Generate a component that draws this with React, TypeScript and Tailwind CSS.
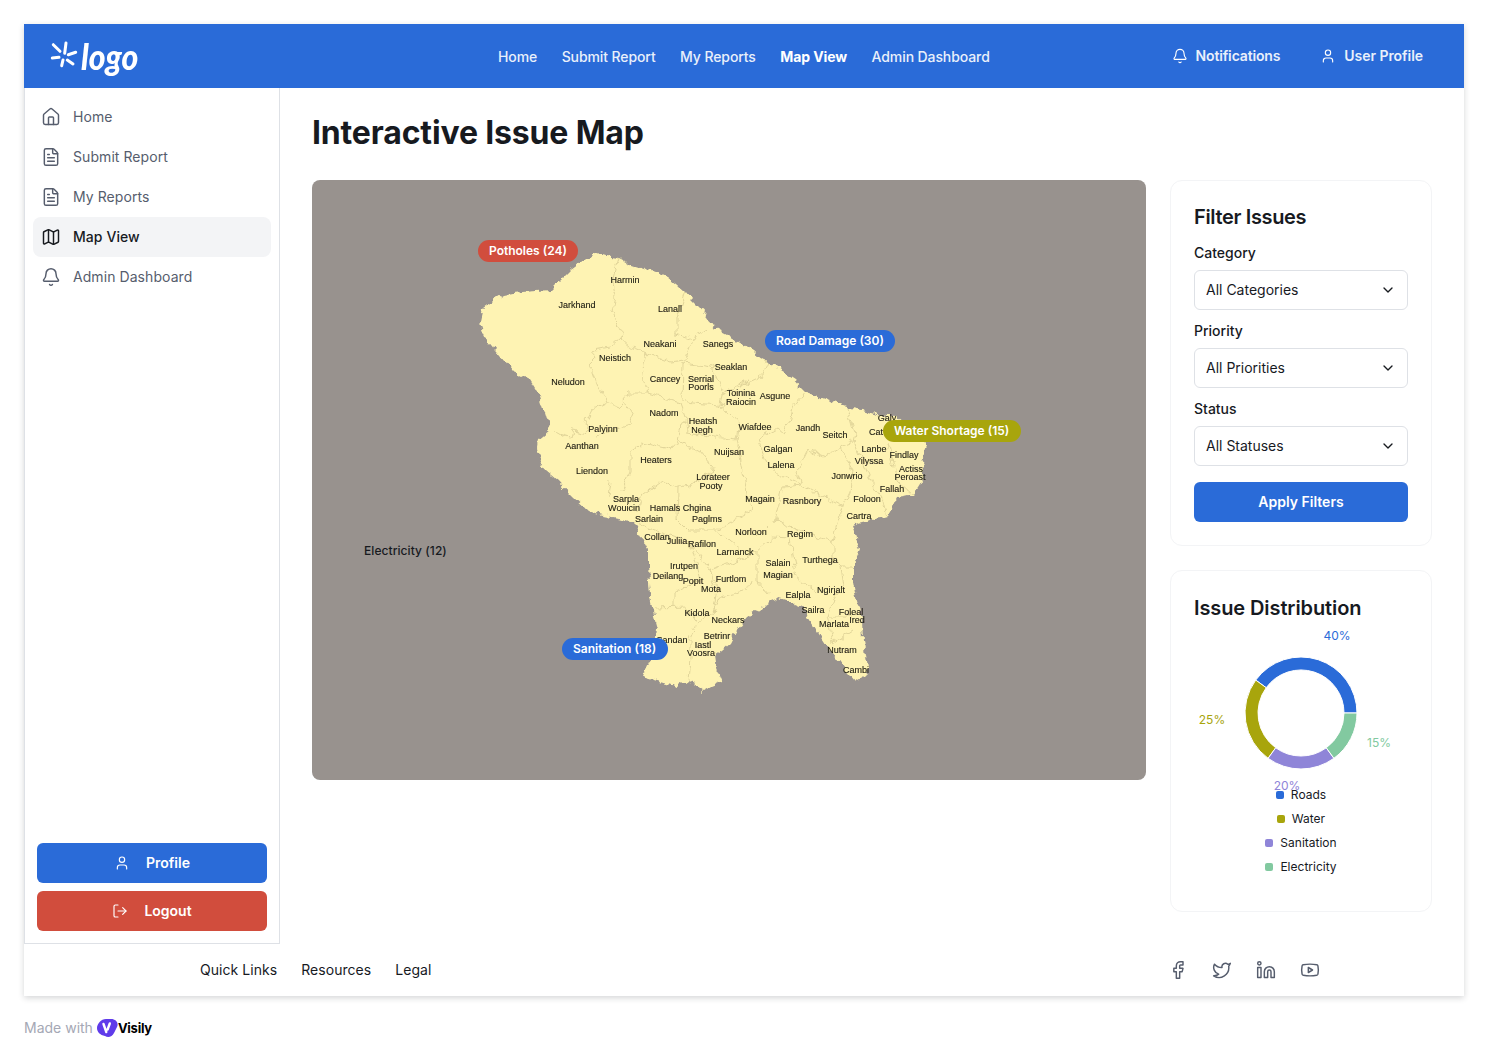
import { Bell, ChevronDown, Facebook, FileText, House, Linkedin, LogOut, Map as MapIcon, Twitter, User, Youtube } from "lucide-react";

const navLinks = ["Home", "Submit Report", "My Reports", "Map View", "Admin Dashboard"];

const sideLinks = [
  { label: "Home", icon: House },
  { label: "Submit Report", icon: FileText },
  { label: "My Reports", icon: FileText },
  { label: "Map View", icon: MapIcon, active: true },
  { label: "Admin Dashboard", icon: Bell },
];

const outline =
  "595,253 605,256 618,258 630,264 643,268 655,272 667,277 676,284 685,292 692,300 700,308 708,318 715,328 728,335 740,342 754,352 767,362 781,371 795,380 801,387 807,393 827,400 847,407 862,410 877,415 897,417 903,422 915,432 928,447 925,455 922,462 924,471 923,480 918,488 913,495 905,497 897,498 892,508 887,517 880,519 872,520 862,522 852,525 856,537 860,550 856,560 853,570 853,582 855,593 859,607 862,620 863,640 865,656 868,672 862,678 855,682 850,676 845,670 836,658 827,647 818,633 810,620 805,612 800,605 790,601 780,598 770,602 758,610 747,617 742,623 737,630 733,637 730,643 722,650 715,655 716,662 717,670 722,682 712,686 703,691 695,685 687,680 677,687 660,682 642,677 648,662 655,647 656,637 657,627 653,612 650,597 649,582 648,567 648,550 641,536 633,522 618,518 603,515 595,513 587,510 572,496 557,480 545,470 540,460 537,447 538,440 550,430 545,413 540,397 535,388 530,380 522,376 513,372 500,356 487,340 483,331 480,322 483,308 493,301 503,295 513,293 523,292 537,291 550,290 560,280 570,270 582,261";

const borders = [
  "618,258 612,283 615,297 612,310 623,333 620,338 610,347 593,350 592,373 597,387 607,402",
  "620,338 630,347 645,353 642,365 645,387 648,393 628,393 623,400 620,407 607,402 592,410 585,423 590,433 572,430 570,437 553,432",
  "685,292 677,318 677,335 692,340 685,360 670,362 645,353",
  "707,330 692,340",
  "683,363 682,400 693,403 720,405 722,393 750,380",
  "683,363 712,367 722,393",
  "648,393 680,403 685,417 678,440 673,450 643,443 630,453 630,473 622,490",
  "623,400 633,417 630,425 597,435",
  "685,417 687,433 737,440 740,423 720,405",
  "767,362 760,378 740,387 750,380",
  "805,392 793,407 790,423 783,433 777,428 758,440 767,463 775,473 802,485",
  "848,408 855,433 853,442 840,447 823,457 808,450 797,472 802,485",
  "840,447 853,470 850,490 842,507",
  "855,442 873,487 883,500 887,517",
  "888,443 897,480 913,495",
  "802,485 783,487 775,520 757,538",
  "802,485 842,507 835,530 833,543",
  "637,510 640,497 663,480 678,488",
  "608,497 610,480",
  "678,488 677,520 687,530 717,530 752,510 747,493 737,440",
  "633,522 670,535 690,542 710,570",
  "717,530 743,552 757,550 773,537 790,538 797,577 817,593",
  "757,550 757,580 770,595",
  "710,570 753,555",
  "710,570 717,590 713,613",
  "750,580 747,590 720,597 713,610",
  "673,607 673,593 700,580 690,542",
  "655,608 687,607 697,623 713,613",
  "697,623 690,640 690,657 688,680",
  "833,543 833,560 840,567 843,587 833,600 827,617 833,643",
  "840,567 853,567",
  "827,617 853,617",
  "833,643 853,630",
  "775,520 833,543",
  "678,440 700,452 715,470 697,482 678,488",
];

const mapLabels: [string, number, number][] = [
  ["Harmin", 625, 280], ["Jarkhand", 577, 305], ["Lanall", 670, 309], ["Neakani", 660, 344], ["Sanegs", 718, 344],
  ["Neistich", 615, 358], ["Seaklan", 731, 367], ["Cancey", 665, 379], ["Serrial", 701, 379], ["Poorls", 701, 387],
  ["Neludon", 568, 382], ["Toinina", 741, 393], ["Raiocin", 741, 402], ["Asgune", 775, 396], ["Nadom", 664, 413],
  ["Heatsh", 703, 421], ["Negh", 702, 430], ["Wiafdee", 755, 427], ["Jandh", 808, 428], ["Seitch", 835, 435],
  ["Palyinn", 603, 429], ["Galy", 887, 418], ["Cat", 876, 432], ["Aanthan", 582, 446], ["Galgan", 778, 449],
  ["Nuijsan", 729, 452], ["Lanbe", 874, 449], ["Findlay", 904, 455], ["Vilyssa", 869, 461], ["Heaters", 656, 460],
  ["Lalena", 781, 465], ["Liendon", 592, 471], ["Actiss", 911, 469], ["Peroast", 910, 477], ["Jonwrio", 847, 476],
  ["Lorateer", 713, 477], ["Pooty", 711, 486], ["Fallah", 892, 489], ["Magain", 760, 499], ["Rasnbory", 802, 501],
  ["Foloon", 867, 499], ["Sarpla", 626, 499], ["Wouicin", 624, 508], ["Hamals", 665, 508], ["Chgina", 697, 508],
  ["Sarlain", 649, 519], ["Paglms", 707, 519], ["Cartra", 859, 516], ["Norloon", 751, 532], ["Regim", 800, 534],
  ["Collan", 657, 537], ["Juliia", 677, 541], ["Rafilon", 702, 544], ["Larnanck", 735, 552], ["Turthega", 820, 560],
  ["Salain", 778, 563], ["Magian", 778, 575], ["Irutpen", 684, 566], ["Deilang", 668, 576], ["Popit", 693, 581],
  ["Furtlom", 731, 579], ["Mota", 711, 589], ["Ngirjalt", 831, 590], ["Ealpla", 798, 595], ["Sailra", 813, 610],
  ["Foleal", 851, 612], ["Marlata", 834, 624], ["Ired", 857, 620], ["Kidola", 697, 613], ["Neckars", 728, 620],
  ["Sandan", 672, 640], ["Betrinr", 717, 636], ["Iastl", 703, 645], ["Voosra", 701, 653], ["Nutram", 842, 650],
  ["Cambi", 856, 670],
];

const chips = [
  { label: "Potholes (24)", cls: "left-[166px] top-[60px] pr-[11px] bg-[#d14d3d]" },
  { label: "Road Damage (30)", cls: "left-[453px] top-[150px] pr-[11px] bg-[#2a6bd8]" },
  { label: "Water Shortage (15)", cls: "left-[571px] top-[240px] pr-[12px] bg-[#a8a50c]" },
  { label: "Sanitation (18)", cls: "left-[250px] top-[458px] pr-[12px] bg-[#2a6bd8]" },
];

const filters = [
  { label: "Category", value: "All Categories" },
  { label: "Priority", value: "All Priorities" },
  { label: "Status", value: "All Statuses" },
];

const legend = [
  { label: "Roads", color: "bg-[#2a6bd8]" },
  { label: "Water", color: "bg-[#a8a50c]" },
  { label: "Sanitation", color: "bg-[#8f85d8]" },
  { label: "Electricity", color: "bg-[#82c9a0]" },
];

// donut goes anticlockwise from 3 o'clock
const slices = [
  { pct: 40, color: "#2a6bd8" },
  { pct: 25, color: "#a8a50c" },
  { pct: 20, color: "#8f85d8" },
  { pct: 15, color: "#82c9a0" },
];

const arcPath = (from: number, to: number) => {
  const cx = 107;
  const cy = 88;
  const ro = 56;
  const ri = 43;
  const pt = (r: number, a: number) => `${cx + r * Math.cos(a)} ${cy - r * Math.sin(a)}`;
  const large = to - from > Math.PI ? 1 : 0;
  return `M${pt(ro, from)} A${ro} ${ro} 0 ${large} 0 ${pt(ro, to)} L${pt(ri, to)} A${ri} ${ri} 0 ${large} 1 ${pt(ri, from)} Z`;
};

const Donut = () => {
  let start = 0;
  return (
    <svg width="214" height="168" viewBox="0 0 214 168" className="block">
      {slices.map((s) => {
        const end = start + (s.pct / 100) * Math.PI * 2;
        const d = arcPath(start, end);
        start = end;
        return <path key={s.color} d={d} fill={s.color} stroke="#fff" strokeWidth="1" />;
      })}
      <text x="143" y="15" textAnchor="middle" fontSize="12" fill="#2a6bd8">40%</text>
      <text x="18" y="99" textAnchor="middle" fontSize="12" fill="#a8a50c">25%</text>
      <text x="93" y="165" textAnchor="middle" fontSize="12" fill="#8f85d8">20%</text>
      <text x="185" y="122" textAnchor="middle" fontSize="12" fill="#82c9a0">15%</text>
    </svg>
  );
};

const IssueMap = () => (
  <svg viewBox="312 180 834 600" className="absolute inset-0 w-full h-full">
    <defs>
      <filter id="rough" x="-5%" y="-5%" width="110%" height="110%" colorInterpolationFilters="sRGB">
        <feTurbulence type="fractalNoise" baseFrequency="0.13" numOctaves="2" seed="4" result="noise" />
        <feDisplacementMap in="SourceGraphic" in2="noise" scale="9" xChannelSelector="R" yChannelSelector="G" />
        <feGaussianBlur stdDeviation="0.35" />
      </filter>
      <filter id="soft">
        <feGaussianBlur stdDeviation="0.2" />
      </filter>
    </defs>
    <g filter="url(#rough)">
      <polygon points={outline} fill="#fef3b3" />
      {borders.map((b) => (
        <polyline key={b} points={b} fill="none" stroke="#ded196" strokeWidth="0.9" />
      ))}
    </g>
    <g filter="url(#soft)" fontSize="9" fill="#1c1a10" stroke="#1c1a10" strokeWidth="0.12" textAnchor="middle" style={{ fontFamily: "Liberation Sans, sans-serif" }}>
      {mapLabels.map(([name, x, y]) => (
        <text key={`${name}${x}`} x={x} y={y + 3}>{name}</text>
      ))}
    </g>
  </svg>
);

export default function App() {
  return (
    <div className="[font-family:Inter,sans-serif] bg-white min-h-[1060px] px-6 pt-6 text-[#171a1f]">
      <div className="w-[1440px] shadow-[0_2px_6px_rgba(23,26,31,0.18)]">
        <header className="h-16 bg-[#2a6bd8] flex items-center text-white text-sm font-medium relative">
          <div className="flex items-center pl-[26px] w-[400px]">
            <svg width="28" height="28" viewBox="0 0 28 28" className="shrink-0 overflow-visible" fill="none" stroke="#fff" strokeWidth="3" strokeLinecap="round">
              <path d="M16 1L14.700 11.300M3.300 2.700L10 9.300M2.300 16L9 15.300M11.700 23.700L13 18M23 22L17.300 18M25.700 10.300L18.300 12.700" />
            </svg>
            <span className="[font-family:Lato,sans-serif] italic font-black text-[32px] leading-none ml-[3px] inline-block scale-y-[1.15]">logo</span>
          </div>
          <nav className="flex gap-[24.5px] ml-[74px] mt-[2px] tracking-[-0.1px]">
            {navLinks.map((l) => (
              <a key={l} href="#" className={l === "Map View" ? "font-bold text-white" : "text-[#e9f0fb]"}>
                {l}
              </a>
            ))}
          </nav>
          <div className="ml-auto flex items-center pr-[41px]">
            <a href="#" className="flex items-center gap-2 mr-[40px]">
              <Bell size={16} strokeWidth={1.7} />
              <span className="font-semibold text-[#e9f0fb] tracking-[-0.15px]">Notifications</span>
            </a>
            <a href="#" className="flex items-center gap-2">
              <User size={16} strokeWidth={1.7} />
              <span className="font-semibold text-[#e9f0fb] tracking-[-0.05px]">User Profile</span>
            </a>
          </div>
        </header>

        <div className="flex h-[856px]">
          <aside className="w-[256px] shrink-0 border border-t-0 border-[#dee1e6] flex flex-col justify-between px-2 pt-[9px] pb-3">
            <nav className="tracking-[0.07px]">
              {sideLinks.map(({ label, icon: Icon, active }) => (
                <a
                  key={label}
                  href="#"
                  className={`flex items-center h-10 rounded-lg pl-2 gap-[12px] text-sm ${active ? "bg-[#f3f4f6] text-[#171a1f] font-medium" : "text-[#565d6d]"}`}
                >
                  <Icon size={20} strokeWidth={1.75} className={active ? "text-[#171a1f]" : "text-[#565d6d]"} />
                  {label}
                </a>
              ))}
            </nav>
            <div className="flex flex-col gap-2 px-[4px]">
              <button className="h-10 rounded-md bg-[#2a6bd8] text-white text-sm font-semibold flex items-center justify-center gap-4">
                <User size={16} strokeWidth={1.75} />
                Profile
              </button>
              <button className="h-10 rounded-md bg-[#d14d3d] text-white text-sm font-semibold flex items-center justify-center gap-4">
                <LogOut size={16} strokeWidth={1.75} />
                Logout
              </button>
            </div>
          </aside>

          <main className="flex-1 px-8 pt-6">
            <h1 className="text-[32px] leading-10 font-bold tracking-[-0.15px] pt-[1px] -mb-[1px]">Interactive Issue Map</h1>
            <div className="flex gap-6 mt-7 items-start">
              <div className="relative w-[834px] h-[600px] rounded-lg bg-[#98928e] overflow-hidden shrink-0">
                <IssueMap />
                {chips.map((c) => (
                  <span key={c.label} className={`absolute h-[22px] pl-[11px] rounded-full text-white text-xs font-semibold flex items-center whitespace-nowrap ${c.cls}`}>
                    {c.label}
                  </span>
                ))}
                <span className="absolute left-[52px] top-[361px] text-xs font-medium leading-[20px] tracking-[0.07px] text-[#171a1f]">Electricity (12)</span>
              </div>

              <div className="w-[262px] flex flex-col gap-6">
                <section className="h-[366px] rounded-xl border border-[#f3f4f6] px-[23px] pt-6">
                  <h2 className="text-xl font-semibold leading-7 mb-[11px] -mt-[2px] tracking-[-0.35px]">Filter Issues</h2>
                  {filters.map((f) => (
                    <div key={f.label} className="mb-[10px]">
                      <label className="block text-sm font-medium leading-[22px] mb-[6px]">{f.label}</label>
                      <div className="h-10 rounded-md border border-[#dee1e6] flex items-center justify-between pl-[11px] pr-[11px] text-sm">
                        {f.value}
                        <ChevronDown size={16} strokeWidth={2} />
                      </div>
                    </div>
                  ))}
                  <button className="w-full h-10 mt-[6px] rounded-md bg-[#2a6bd8] text-white text-sm font-semibold">Apply Filters</button>
                </section>

                <section className="h-[342px] rounded-xl border border-[#f3f4f6] px-[23px] pt-6">
                  <h2 className="text-xl font-semibold leading-7 -mt-[1px] tracking-[-0.1px]">Issue Distribution</h2>
                  <div className="mt-[3px]">
                    <Donut />
                  </div>
                  <ul className="flex flex-col items-center -mt-[10px] text-xs">
                    {legend.map((l) => (
                      <li key={l.label} className="h-6 flex items-center gap-[7px]">
                        <span className={`w-2 h-2 rounded-[2px] ${l.color}`} />
                        {l.label}
                      </li>
                    ))}
                  </ul>
                </section>
              </div>
            </div>
          </main>
        </div>

        <footer className="h-[52px] flex items-center justify-between pl-[176px] pr-[144px] text-sm">
          <div className="flex gap-6 tracking-[0.05px]">
            <a href="#">Quick Links</a>
            <a href="#">Resources</a>
            <a href="#">Legal</a>
          </div>
          <div className="flex gap-6 text-[#565d6d]">
            <Facebook size={20} strokeWidth={1.75} />
            <Twitter size={20} strokeWidth={1.75} />
            <Linkedin size={20} strokeWidth={1.75} />
            <Youtube size={20} strokeWidth={1.75} />
          </div>
        </footer>
      </div>

      <div className="flex items-center h-5 mt-[22px] text-sm text-[#a5a8b5]">
        Made with
        <svg width="21" height="18" viewBox="0 0 21 18" className="ml-1">
          <path d="M9 0h5c5 0 8 4 6 8l-3 6c-2 4-6 5-9 3C3 16 0 13 0 9s4-9 9-9z" fill="#5f3bea" />
          <path d="M6.500 5L9.300 13M12.800 4.500L10.600 10.500" fill="none" stroke="#fff" strokeWidth="2.400" strokeLinecap="round" />
        </svg>
        <span className="font-bold text-black text-[13px] tracking-[-0.25px]">Visily</span>
      </div>
    </div>
  );
}
